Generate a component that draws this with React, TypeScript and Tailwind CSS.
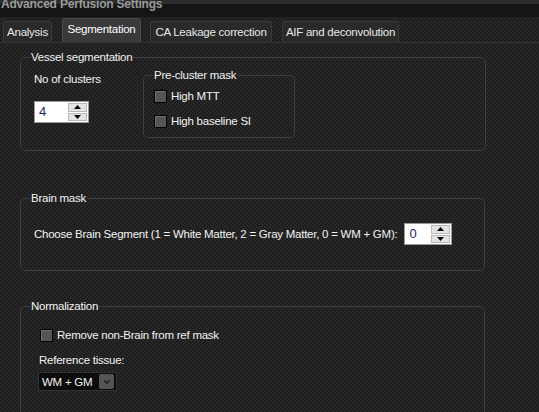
import { ChevronDown } from "lucide-react";

const font = { fontFamily: "'Liberation Sans', Arial, sans-serif" };

function Spin({ value, width }: { value: string; width: string }) {
  return (
    <div className={`flex h-[22px] ${width} border border-[#9a9a9a] bg-white p-[1px]`}>
      <span className="flex-1 pl-[3px] text-[13px] leading-[18px] text-[#1c1c6e]">{value}</span>
      <div className="flex w-[19px] flex-col gap-[1px]">
        <div className="flex flex-1 items-center justify-center border border-[#b8b8b8] bg-[#e4e4e4]">
          <svg width="7" height="4" viewBox="0 0 7 4"><path d="M0 4 L3.5 0 L7 4Z" fill="#000" /></svg>
        </div>
        <div className="flex flex-1 items-center justify-center border border-[#b8b8b8] bg-[#e4e4e4]">
          <svg width="7" height="4" viewBox="0 0 7 4"><path d="M0 0 L3.5 4 L7 0Z" fill="#000" /></svg>
        </div>
      </div>
    </div>
  );
}

function Check({ label }: { label: string }) {
  return (
    <label className="flex h-[14px] items-center gap-[4px]">
      <span className="h-[13px] w-[13px] border border-black bg-[#555] shadow-[inset_1px_1px_0_#707070]" />
      <span>{label}</span>
    </label>
  );
}

function Group({ title, className, children }: { title: string; className: string; children: React.ReactNode }) {
  return (
    <fieldset className={`rounded-[5px] border border-[#3e3e3e] ${className}`}>
      <legend className="ml-[9px] px-[1px] leading-[14px]">{title}</legend>
      {children}
    </fieldset>
  );
}

const tabs = [
  { t: "Analysis", c: "ml-[3px] w-[49px]" },
  { t: "Segmentation", c: "ml-[10px] w-[79px]", sel: true },
  { t: "CA Leakage correction", c: "ml-[9px] w-[122px]" },
  { t: "AIF and deconvolution", c: "ml-[10px] w-[117px]" },
];

export default function App() {
  return (
    <div
      style={font}
      className="h-[412px] w-[539px] overflow-hidden bg-[#222] bg-[image:repeating-conic-gradient(#272727_0%_25%,#1e1e1e_0%_50%)] bg-[length:4px_4px] text-[11.5px] leading-[14px] tracking-[-0.25px] text-[#f2f2f2]"
    >
      <div className="h-[17px] border-t-[4px] border-[#2c2c2c] bg-[#151515]">
        <div className="-mt-[7px] pl-[1px] text-[12px] font-bold leading-[14px] tracking-[-0.2px] text-[#9a9a9a]">Advanced Perfusion Settings</div>
      </div>
      <div className="flex h-[26px] items-end border-b border-[#333]">
        {tabs.map(({ t, c, sel }) => (
          <div
            key={t}
            className={
              sel
                ? `flex h-[24px] items-center justify-center whitespace-nowrap rounded-t-[3px] border border-b-0 border-[#4a4a4a] bg-[#3a3a3a] pb-[4px] text-[11.5px] text-white ${c}`
                : `flex h-[21px] items-center justify-center whitespace-nowrap rounded-t-[3px] border border-b-0 border-[#3a3a3a] bg-[#2a2a2a] text-[11.5px] text-[#e8e8e8] ${c}`
            }
          >
            {t}
          </div>
        ))}
      </div>
      <div className="flex flex-col pl-[20px] pt-[7px]">
        <Group title="Vessel segmentation" className="h-[101px] w-[466px]">
          <div className="flex pl-[13px] pt-[8px]">
            <div className="flex w-[109px] flex-col gap-[15px]">
              <span>No of clusters</span>
              <Spin value="4" width="w-[55px]" />
            </div>
            <Group title="Pre-cluster mask" className="-mt-[4px] h-[70px] w-[152px]">
              <div className="flex flex-col gap-[11px] pl-[10px] pt-[7px]">
                <Check label="High MTT" />
                <Check label="High baseline SI" />
              </div>
            </Group>
          </div>
        </Group>
        <Group title="Brain mask" className="mt-[40px] h-[80px] w-[465px]">
          <div className="flex items-center gap-[7px] pl-[13px] pt-[18px]">
            <span className="whitespace-nowrap">Choose Brain Segment (1 = White Matter, 2 = Gray Matter, 0 = WM + GM):</span>
            <Spin value="0" width="w-[48px]" />
          </div>
        </Group>
        <Group title="Normalization" className="mt-[28px] h-[140px] w-[465px]">
          <div className="flex flex-col pl-[19px] pt-[15px]">
            <Check label="Remove non-Brain from ref mask" />
            <span className="-ml-[1px] mt-[11px]">Reference tissue:</span>
            <div className="-ml-[2px] mt-[5px] flex h-[19px] w-[79px] items-center justify-between border border-[#333] bg-[#0c0c0c] pl-[3px] pr-[2px]">
              <span>WM + GM</span>
              <span className="flex h-[15px] w-[15px] items-center justify-center rounded-[2px] bg-[#545454]">
                <ChevronDown size={10} strokeWidth={3} color="#1a1a1a" />
              </span>
            </div>
          </div>
        </Group>
      </div>
    </div>
  );
}
